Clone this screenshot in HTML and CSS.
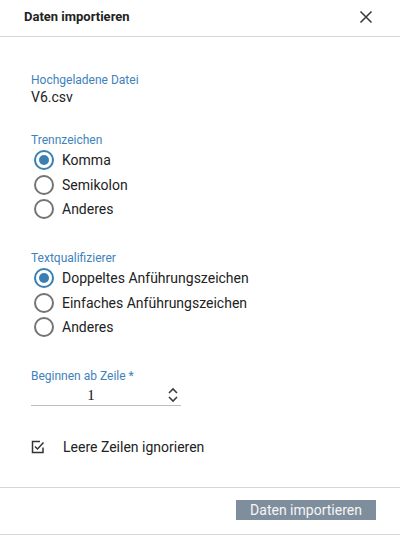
FILE: index.html
```html
<!DOCTYPE html>
<html lang="de">
<head>
<meta charset="utf-8">
<link rel="stylesheet" href="styles.css">
</head>
<body>
<div class="dialog">
  <div class="header">
    <span class="title">Daten importieren</span>
    <svg class="close" width="14" height="14" viewBox="0 0 14 14"><path d="M1.5 1.5 L12.5 12.5 M12.5 1.5 L1.5 12.5" stroke="#3c3c3c" stroke-width="1.6" fill="none"/></svg>
  </div>
  <div class="body">
    <div class="group first">
      <div class="label">Hochgeladene Datei</div>
      <div class="value">V6.csv</div>
    </div>
    <div class="group g2">
      <div class="label">Trennzeichen</div>
      <div class="radio"><span class="circle on"></span><span>Komma</span></div>
      <div class="radio"><span class="circle"></span><span>Semikolon</span></div>
      <div class="radio"><span class="circle"></span><span>Anderes</span></div>
    </div>
    <div class="group g3">
      <div class="label">Textqualifizierer</div>
      <div class="radio"><span class="circle on"></span><span>Doppeltes Anführungszeichen</span></div>
      <div class="radio"><span class="circle"></span><span>Einfaches Anführungszeichen</span></div>
      <div class="radio"><span class="circle"></span><span>Anderes</span></div>
    </div>
    <div class="group g3">
      <div class="label">Beginnen ab Zeile *</div>
      <div class="number">
        <span class="num">1</span>
        <svg class="spin" width="12" height="18" viewBox="0 0 12 18"><path d="M2 7 L6 3 L10 7 M2 11 L6 15 L10 11" stroke="#3c3c3c" stroke-width="1.6" fill="none"/></svg>
      </div>
    </div>
    <div class="check">
      <svg width="14" height="14" viewBox="0 0 14 14"><path d="M12 7.5 V12.5 H1.5 V1.5 H9" stroke="#333" stroke-width="1.5" fill="none"/><path d="M4 6.5 L6.5 9 L12.5 2.5" stroke="#333" stroke-width="1.5" fill="none"/></svg>
      <span>Leere Zeilen ignorieren</span>
    </div>
  </div>
  <div class="footer">
    <button class="btn">Daten importieren</button>
  </div>
</div>
</body>
</html>
```
FILE: styles.css
```css
html, body {
  margin: 0;
  padding: 0;
  background: #fff;
}
body {
  font-family: Roboto, "Liberation Sans", sans-serif;
  color: #212121;
  width: 400px;
  height: 535px;
  overflow: hidden;
}
.dialog {
  display: flex;
  flex-direction: column;
  height: 535px;
  box-sizing: border-box;
  border-bottom: 1px solid #d6d6d6;
}
.header {
  height: 36px;
  border-bottom: 1px solid #d6d6d6;
  display: flex;
  align-items: center;
  justify-content: space-between;
  padding: 0 27px 0 24px;
}
.title {
  font-size: 13px;
  font-weight: 700;
  color: #222;
  margin-top: -4px;
}
.close {
  margin-top: -2px;
}
.body {
  flex: 1;
  padding-left: 31px;
}
.group.first {
  margin-top: 35px;
}
.group.g2 {
  margin-top: 26px;
}
.group.g3 {
  margin-top: 29px;
}
.label {
  font-size: 12px;
  line-height: 16px;
  color: #3e82bb;
}
.value {
  font-size: 14px;
  line-height: 18px;
  color: #222;
}
.radio {
  display: flex;
  align-items: center;
  height: 24.4px;
  font-size: 14px;
  color: #222;
}
.circle {
  width: 20px;
  height: 20px;
  box-sizing: border-box;
  border: 2px solid #747474;
  border-radius: 50%;
  margin: 0 8px 0 3px;
  display: flex;
  align-items: center;
  justify-content: center;
}
.circle.on {
  border-color: #3a7fb3;
}
.circle.on::after {
  content: "";
  width: 10px;
  height: 10px;
  border-radius: 50%;
  background: #3a7fb3;
}
.number {
  width: 150px;
  height: 21px;
  border-bottom: 1px solid #bdbdbd;
  display: flex;
  align-items: center;
  justify-content: space-between;
  box-sizing: border-box;
  margin-top: 1px;
}
.num {
  font-family: "Liberation Serif", serif;
  font-size: 15px;
  width: 120px;
  text-align: center;
  color: #111;
}
.spin {
  margin-right: 2px;
}
.check {
  display: flex;
  align-items: center;
  margin-top: 33px;
  font-size: 14px;
  color: #222;
}
.check svg {
  margin-right: 18px;
}
.footer {
  height: 46px;
  border-top: 1px solid #d6d6d6;
  display: flex;
  justify-content: flex-end;
  align-items: flex-start;
  padding-right: 24px;
}
.btn {
  margin-top: 12px;
  width: 140px;
  height: 20px;
  border: none;
  background: #7f8e9c;
  color: #f5f6f8;
  font-family: Roboto, "Liberation Sans", sans-serif;
  font-size: 14px;
  padding: 0;
  line-height: 20px;
}
```
